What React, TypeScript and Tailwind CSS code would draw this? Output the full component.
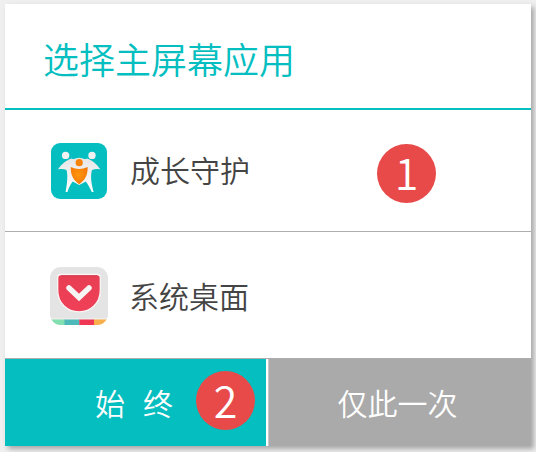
import type { ReactNode } from "react";

function Badge({ children }: { children: ReactNode }) {
  return (
    <span className="flex size-[59px] items-center justify-center rounded-full bg-[#e84a4a] pb-[3px] font-['Noto_Sans_CJK_SC',sans-serif] text-[43px] leading-none font-[350] text-white">
      {children}
    </span>
  );
}

function FamilyIcon() {
  return (
    <svg width="56" height="56" viewBox="0 0 56 56">
      <defs>
        <linearGradient id="body" x1="0" y1="0" x2="0" y2="1">
          <stop offset="0" stopColor="#e6e6e6" />
          <stop offset="1" stopColor="#ffffff" />
        </linearGradient>
        <radialGradient id="orange" cx="0.45" cy="0.45" r="0.65">
          <stop offset="0" stopColor="#ff960d" />
          <stop offset="1" stopColor="#f37604" />
        </radialGradient>
      </defs>
      <rect width="56" height="56" rx="9" fill="#05bebf" />
      <circle cx="14.6" cy="12.4" r="3.7" fill="#f1f1f1" />
      <circle cx="41" cy="12.4" r="3.7" fill="#f1f1f1" />
      <path
        d="M6.8 26.4C11 20.5 15 17.2 20.5 15.4C23.5 17 25 14.8 28.2 14.8S33 17 36 15.4C41.5 17.2 45.5 20.5 49.4 26.4C46.5 25.6 43.5 25.8 41 27C39.3 33 40.2 40 42.6 49H40.8C38.8 44.5 37 41.5 34.8 38.5L28.2 42L21.7 38.5C19.5 41.5 17.7 44.5 16.4 49H14.6C16.2 40 17 33 15.5 27C13 25.8 10 25.6 6.8 26.4Z"
        fill="url(#body)"
      />
      <circle cx="28.2" cy="19.7" r="3.6" fill="#f78208" />
      <path d="M19.8 24Q28.2 28 36.6 24C36.9 31.5 34.5 37 28.2 41.2C22 37 19.5 31.5 19.8 24Z" fill="url(#orange)" />
    </svg>
  );
}

function PocketIcon() {
  return (
    <svg width="58" height="58" viewBox="0 0 58 58">
      <defs>
        <clipPath id="tile"><rect width="58" height="58" rx="11" /></clipPath>
        <linearGradient id="shield" x1="0" y1="0" x2="0" y2="1">
          <stop offset="0" stopColor="#e73e53" />
          <stop offset="1" stopColor="#f04058" />
        </linearGradient>
      </defs>
      <g clipPath="url(#tile)">
        <rect width="58" height="58" fill="#e4e4e4" />
        <rect y="51.5" width="58" height="1" fill="#f8f4f2" />
        <rect y="52.5" width="15" height="6" fill="#82dfb0" />
        <rect x="14.5" y="52.5" width="15" height="6" fill="#4eb9b9" />
        <rect x="29.3" y="52.5" width="15" height="6" fill="#ef3655" />
        <rect x="44" y="52.5" width="14" height="6" fill="#f9b04b" />
      </g>
      <path d="M11 7.5H47Q50.3 7.5 50.3 11V23C50.3 36 41 44.8 29 44.8S7.7 36 7.7 23V11Q7.7 7.5 11 7.5Z" fill="url(#shield)" stroke="#faf6f6" strokeWidth="1.3" />
      <path d="M11 8.7H47" stroke="#c9384a" strokeWidth="0.8" />
      <path d="M19 21L29 30.5L39 21" fill="none" stroke="#f7f4f4" strokeWidth="5.5" strokeLinecap="round" strokeLinejoin="miter" />
    </svg>
  );
}

export default function App() {
  return (
    <div className="h-[452px] w-[536px] overflow-hidden bg-[#efefef] pt-1 pl-[5px] font-['Noto_Sans_CJK_SC',sans-serif] font-[350]">
      <main className="flex h-[442px] w-[526px] flex-col bg-white shadow-[3px_3px_5px_rgba(0,0,0,0.3)]">
        <header className="flex h-[106px] shrink-0 items-center border-b-2 border-[#05bebf] pt-1 pl-[38px] text-[36px] leading-none text-[#05bebf]">
          <h1>选择主屏幕应用</h1>
        </header>
        <section className="flex h-[122px] shrink-0 items-center border-b border-[#adadad] pl-[46px] text-[30px] leading-none text-[#444]">
          <FamilyIcon />
          <span className="mb-1 ml-[23px]">成长守护</span>
          <div className="mt-[5px] ml-[127px]">
            <Badge>1</Badge>
          </div>
        </section>
        <section className="flex h-[127px] shrink-0 items-center border-b border-[#adadad] pl-[45px] text-[30px] leading-none text-[#444]">
          <div className="mt-px">
            <PocketIcon />
          </div>
          <span className="ml-[21px]">系统桌面</span>
        </section>
        <footer className="flex h-[87px] text-[30px] leading-none text-white">
          <button className="flex w-[261px] items-center bg-[#05bebf] pl-[90px]">
            <span className="-mt-0.5 flex gap-[18px]">
              <span>始</span>
              <span>终</span>
            </span>
            <span className="-mt-1 ml-[23px]">
              <Badge>2</Badge>
            </span>
          </button>
          <button className="ml-0.5 flex-1 border-l border-[#c8c8c8] bg-[#aaa] pr-[5px] pb-0.5">仅此一次</button>
        </footer>
      </main>
    </div>
  );
}
